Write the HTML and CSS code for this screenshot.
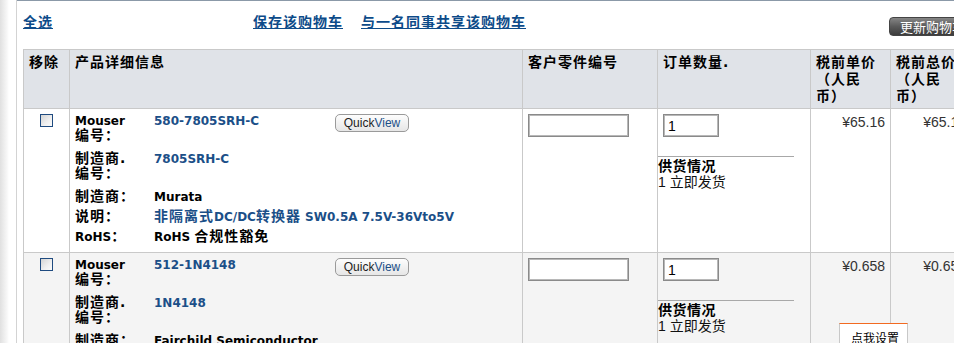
FILE: index.html
```html
<!DOCTYPE html>
<html lang="zh-CN">
<head>
<meta charset="utf-8">
<title>购物车</title>
<link rel="stylesheet" href="styles.css">
</head>
<body>
<div class="page">
  <div class="gutter"></div>
  <main class="main">
    <div class="toolbar">
      <a class="link sel-all" href="#">全选</a>
      <a class="link save" href="#">保存该购物车</a>
      <a class="link share" href="#">与一名同事共享该购物车</a>
      <button class="update" type="button">更新购物车</button>
    </div>
    <table class="cart">
      <colgroup>
        <col class="c-rm"><col class="c-det"><col class="c-cust"><col class="c-qty"><col class="c-unit"><col class="c-tot">
      </colgroup>
      <thead>
        <tr>
          <th>移除</th>
          <th>产品详细信息</th>
          <th>客户零件编号</th>
          <th>订单数量.</th>
          <th>税前单价（人民币）</th>
          <th>税前总价（人民币）</th>
        </tr>
      </thead>
      <tbody>
        <tr>
          <td class="rm"><input type="checkbox" class="chk"></td>
          <td class="det">
            <div class="dl">
              <div class="lbl two">Mouser <span class="zh">编号：</span></div>
              <div class="val two"><a href="#">580-7805SRH-C</a></div>
              <div class="qv-cell"><button class="qv" type="button">Quick<span>View</span></button></div>
              <div class="lbl two"><span class="zh">制造商.</span> <span class="zh">编号：</span></div>
              <div class="val wide two"><a href="#">7805SRH-C</a></div>
              <div class="lbl"><span class="zh">制造商：</span></div>
              <div class="val wide plain">Murata</div>
              <div class="lbl"><span class="zh">说明：</span></div>
              <div class="val wide"><a href="#"><span class="zh">非隔离式</span>DC/DC<span class="zh">转换器</span> SW0.5A 7.5V-36Vto5V</a></div>
              <div class="lbl">RoHS<span class="zh">：</span></div>
              <div class="val wide plain">RoHS <span class="zh">合规性豁免</span></div>
            </div>
          </td>
          <td class="cust"><input class="field cust-in" type="text"></td>
          <td class="qty">
            <input class="field qty-in" type="text" value="1">
            <div class="avail">
              <div class="avail-h">供货情况</div>
              <div class="avail-v">1 立即发货</div>
            </div>
          </td>
          <td class="price">¥65.16</td>
          <td class="price">¥65.16</td>
        </tr>
        <tr class="alt">
          <td class="rm"><input type="checkbox" class="chk"></td>
          <td class="det">
            <div class="dl">
              <div class="lbl two">Mouser <span class="zh">编号：</span></div>
              <div class="val two"><a href="#">512-1N4148</a></div>
              <div class="qv-cell"><button class="qv" type="button">Quick<span>View</span></button></div>
              <div class="lbl two"><span class="zh">制造商.</span> <span class="zh">编号：</span></div>
              <div class="val wide two"><a href="#">1N4148</a></div>
              <div class="lbl"><span class="zh">制造商：</span></div>
              <div class="val wide plain">Fairchild Semiconductor</div>
              <div class="lbl"><span class="zh">说明：</span></div>
              <div class="val wide"><a href="#"><span class="zh">二极管 - 通用，功率，开关</span> 100V Io/200mA BULK</a></div>
              <div class="lbl">RoHS<span class="zh">：</span></div>
              <div class="val wide plain">RoHS <span class="zh">合规</span></div>
            </div>
          </td>
          <td class="cust"><input class="field cust-in" type="text"></td>
          <td class="qty">
            <input class="field qty-in" type="text" value="1">
            <div class="avail">
              <div class="avail-h">供货情况</div>
              <div class="avail-v">1 立即发货</div>
            </div>
          </td>
          <td class="price">¥0.658</td>
          <td class="price">¥0.658</td>
        </tr>
      </tbody>
    </table>
  </main>
</div>
<div class="setup">点我设置</div>
</body>
</html>
```

FILE: styles.css
```css
* { box-sizing: border-box; }

html, body {
  margin: 0;
  padding: 0;
  overflow: hidden;
  background: #fff;
}

body {
  font-family: "DejaVu Sans", "Noto Sans CJK SC", sans-serif;
  font-size: 12px;
  color: #000;
  text-spacing-trim: space-all;
}

.page {
  display: flex;
  width: 1100px;
  min-height: 343px;
}

.gutter {
  flex: 0 0 17px;
  border-right: 1px solid #d3d3d3;
  background: linear-gradient(to right, #e0e0e0 0, #eaeaea 3px, #f7f7f7 7px, #fff 9px);
}

.main {
  flex: 1 1 auto;
  border-top: 1px solid #8b99a8;
  padding-left: 6px;
}

/* toolbar */
.toolbar {
  height: 48px;
  display: flex;
  align-items: flex-start;
  padding-top: 13px;
}

.link {
  font-size: 14px;
  letter-spacing: 1px;
  line-height: 17px;
  font-weight: bold;
  color: #0d4b89;
  text-decoration: underline;
}

.sel-all { width: 230px; }
.save { margin-right: 18px; }

.update {
  margin-left: 363px;
  margin-top: 3px;
  width: 100px;
  height: 19px;
  padding: 0 0 0 10px;
  font-family: "Noto Sans CJK SC", sans-serif;
  font-size: 13px;
  line-height: 17px;
  color: #fff;
  text-align: left;
  border: 1px solid #444;
  border-radius: 4px;
  background: linear-gradient(#858585, #5a5a5a 50%, #3c3c3c);
}

/* table */
.cart {
  border-collapse: collapse;
  table-layout: fixed;
  width: 949px;
}

.c-rm { width: 46px; }
.c-det { width: 453px; }
.c-cust { width: 135px; }
.c-qty { width: 153px; }
.c-unit { width: 80px; }
.c-tot { width: 81px; }

.cart th,
.cart td {
  border: 1px solid #c9c9c9;
  vertical-align: top;
}

.cart th {
  background: #e0e3e8;
  font-size: 14px;
  letter-spacing: 1px;
  line-height: 17px;
  font-weight: bold;
  text-align: left;
  padding: 4px 5px 3px 5px;
  text-spacing-trim: space-all;
}

.cart td {
  padding: 5px 5px 5px 5px;
  background: #fff;
}

.cart tr.alt td { background: #f4f4f4; }

.rm { text-align: center; }

.chk {
  appearance: none;
  -webkit-appearance: none;
  display: inline-block;
  width: 13px;
  height: 13px;
  margin: 0;
  border: 1px solid #1f4b80;
  background: linear-gradient(135deg, #d4d4d4, #f0f0f0 60%, #fbfbfb);
}

/* details */
.cart td.det {
  font-weight: bold;
  line-height: 15px;
  padding-bottom: 7px;
}

.dl {
  display: grid;
  grid-template-columns: 64px 166px 1fr;
  column-gap: 15px;
  row-gap: 5px;
}

.two { padding-bottom: 3px; }

.zh {
  font-size: 14px;
  letter-spacing: 1px;
  line-height: 13px;
  vertical-align: top;
}

.val a {
  color: #1b4f88;
  text-decoration: none;
}

.val.wide { grid-column: 2 / -1; }
.val.plain { color: #000; }

.qv-cell { justify-self: start; }

.qv {
  width: 74px;
  height: 18px;
  padding: 0;
  font-family: "Liberation Sans", sans-serif;
  font-size: 12px;
  line-height: 16px;
  color: #222;
  border: 1px solid #9a9a9a;
  border-radius: 5px;
  background: linear-gradient(#fdfdfd, #e6e6e6);
}

.qv span { color: #1b4f88; }

/* inputs */
.field {
  display: block;
  height: 23px;
  margin: 0;
  padding: 0 4px;
  font-family: "Liberation Sans", sans-serif;
  font-size: 14px;
  color: #000;
  background: #fff;
  border: 1px solid #8a8a8a;
  box-shadow: inset 0 0 0 1px #b8b8b8;
  outline: none;
}

.cust-in { width: 101px; }
.qty-in { width: 56px; }

.avail {
  margin: 19px 0 0 -5px;
  width: 136px;
  border-top: 1px solid #a8a8a8;
  font-family: "Liberation Sans", "Noto Sans CJK SC", sans-serif;
  font-size: 14px;
  line-height: 17px;
}

.avail-h {
  font-family: "Noto Sans CJK SC", sans-serif;
  font-weight: bold;
  letter-spacing: 0.5px;
}

.avail-v { color: #111; }

.price {
  text-align: right;
  font-family: "Liberation Sans", sans-serif;
  font-size: 14px;
  line-height: 16px;
  color: #333;
}

/* floating widget */
.setup {
  position: fixed;
  left: 839px;
  top: 323px;
  width: 69px;
  height: 30px;
  padding: 6px 0 0 11px;
  font-family: "Noto Sans CJK SC", sans-serif;
  font-size: 12px;
  line-height: 16px;
  color: #000;
  background: #fff;
  border-top: 1px solid #f26a21;
  border-left: 1px solid #c8c8c8;
  border-right: 1px solid #c8c8c8;
}
```
